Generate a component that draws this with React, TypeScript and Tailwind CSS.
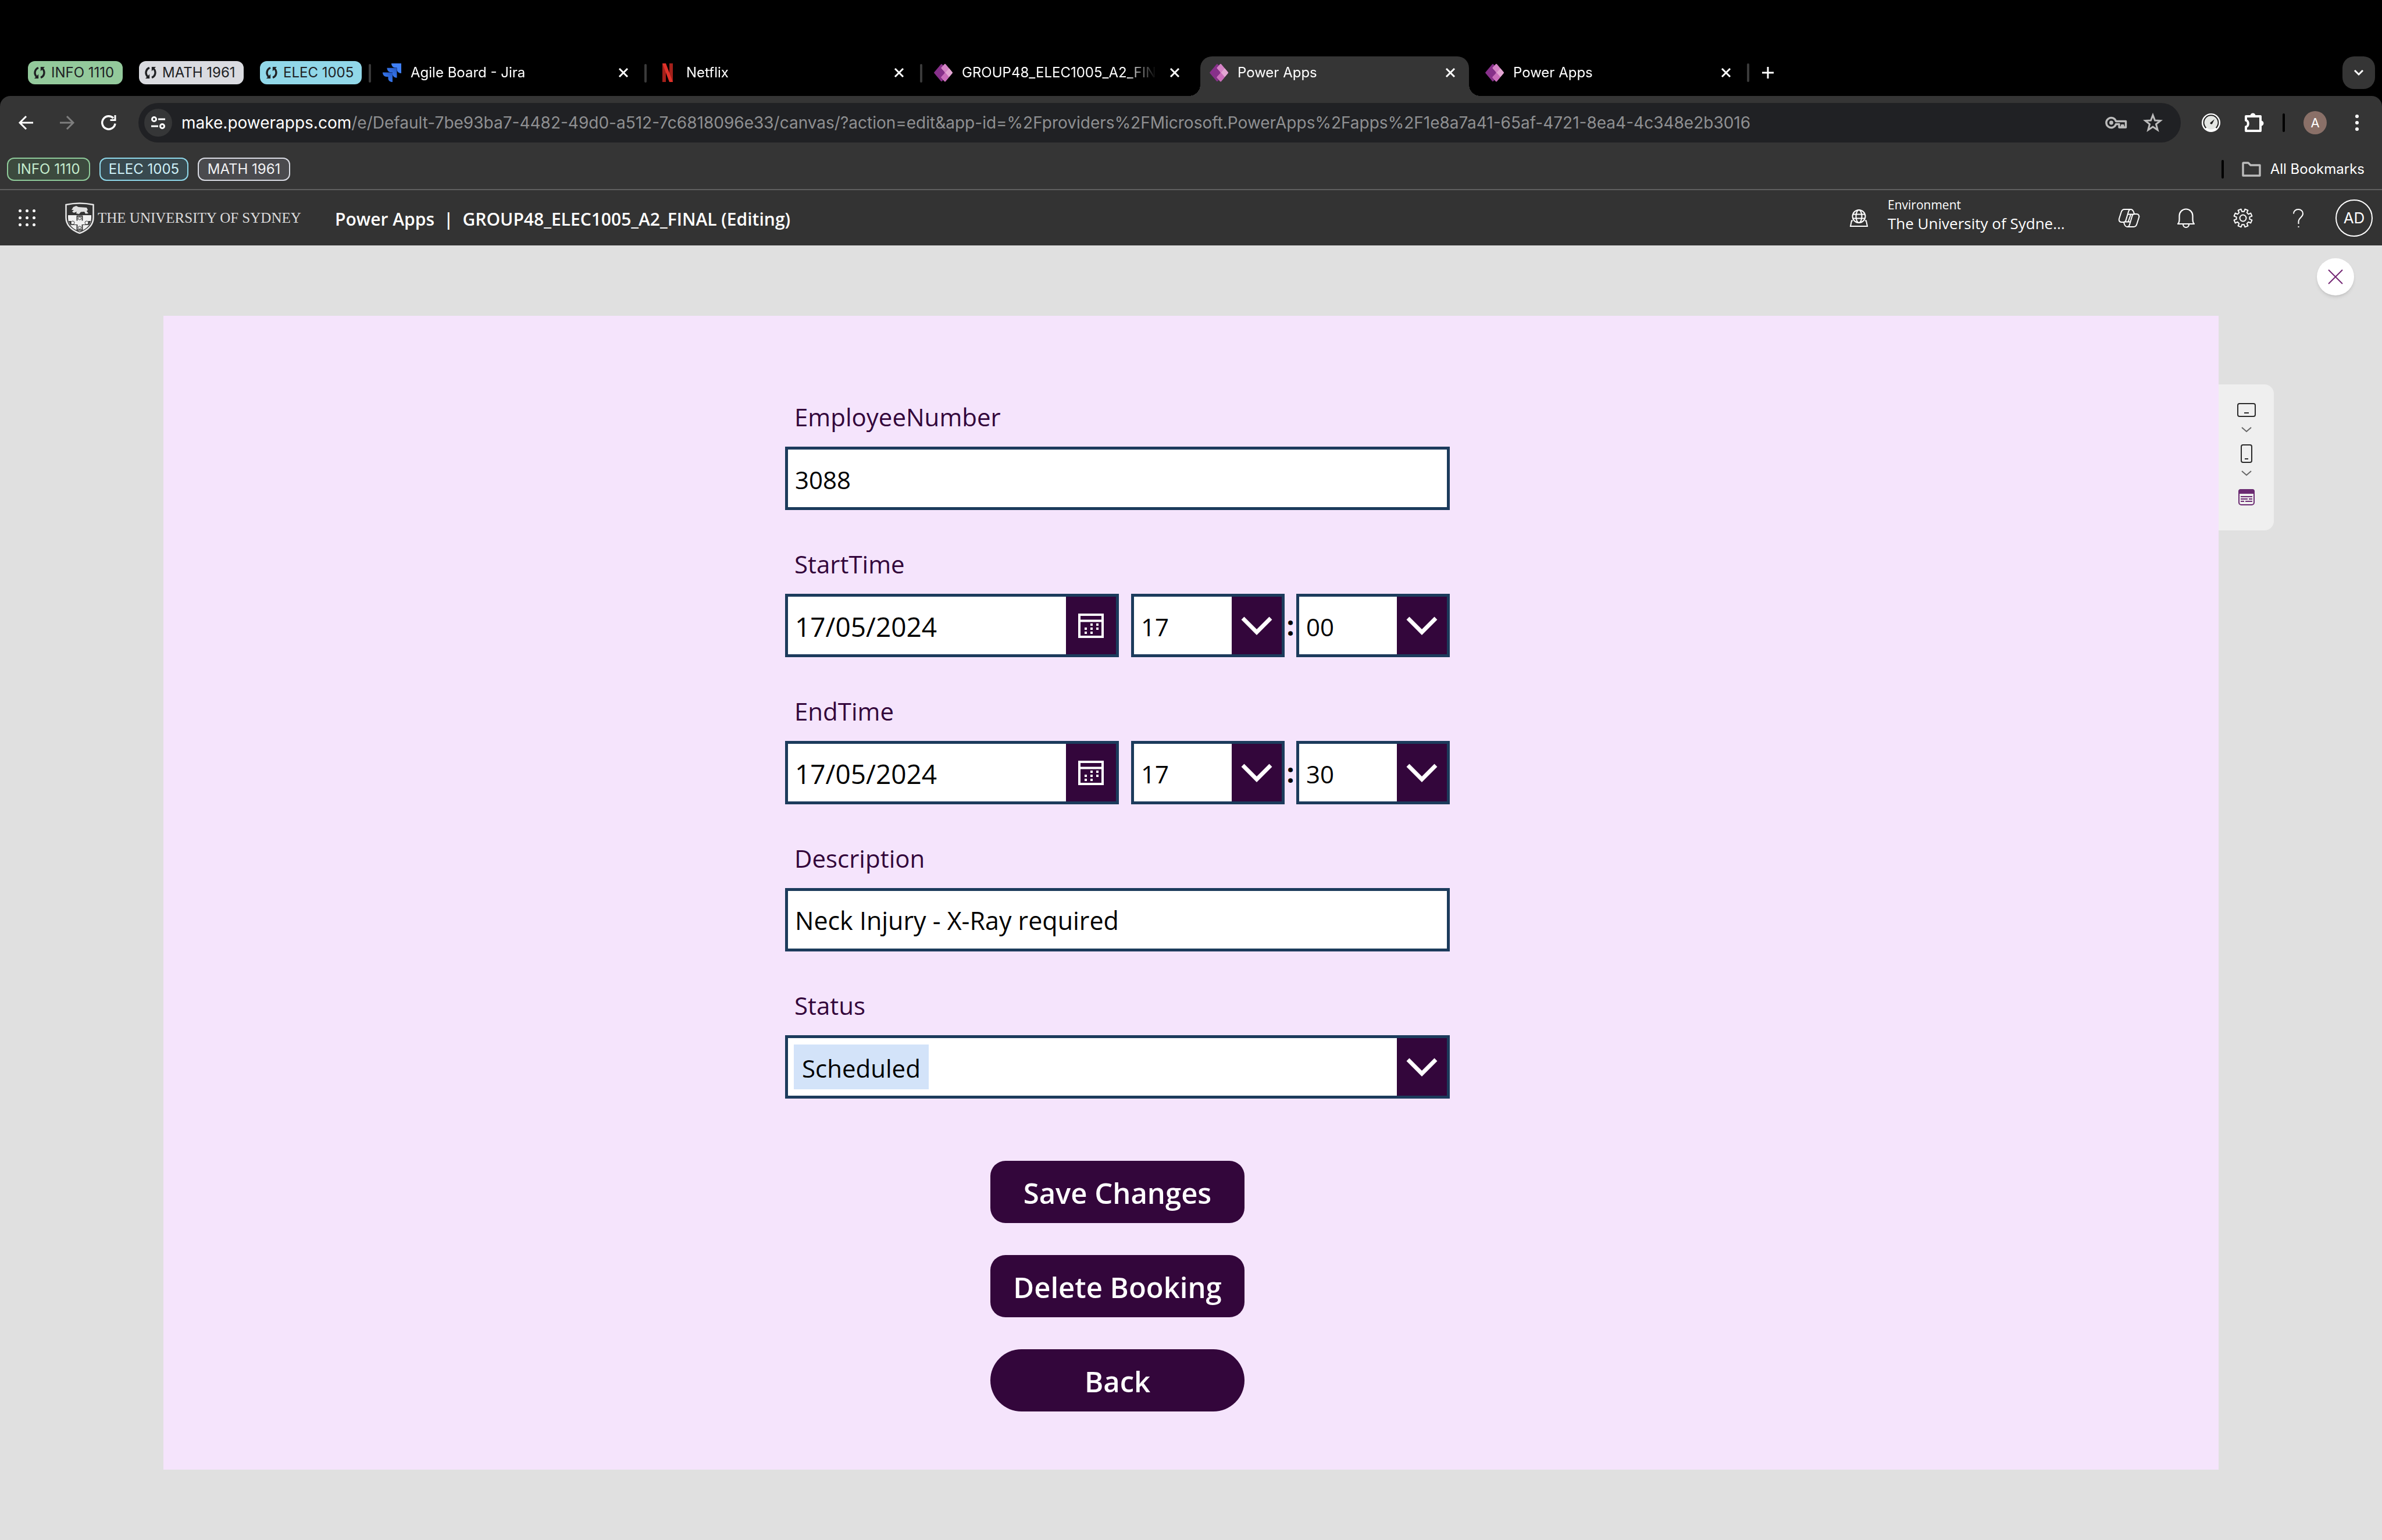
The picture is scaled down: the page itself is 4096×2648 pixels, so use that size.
import React from "react";

const ui = "font-['Inter','Liberation_Sans',sans-serif]";
const segoe = "font-['Open_Sans','Noto_Sans',sans-serif]";

/* ---------- icons ---------- */

const Svg = ({
  w,
  h,
  sw = 2,
  className = "",
  children,
}: {
  w: number;
  h: number;
  sw?: number;
  className?: string;
  children: React.ReactNode;
}) => (
  <svg
    width={w}
    height={h}
    viewBox={`0 0 ${w} ${h}`}
    fill="none"
    stroke="currentColor"
    strokeWidth={sw}
    className={`shrink-0 overflow-visible ${className}`}
    aria-hidden="true"
  >
    {children}
  </svg>
);

const SyncIcon = () => (
  <Svg w={20} h={20} sw={3.4}>
    <path d="M8 1.500C1.500 4 0 12 5 17" />
    <path d="M1 20H8.200V12.500Z" fill="currentColor" stroke="none" />
    <path d="M12 18.500C18.500 16 20 8 15 3" />
    <path d="M19 0H11.800V7.500Z" fill="currentColor" stroke="none" />
  </Svg>
);

const CrossIcon = () => (
  <Svg w={16} h={16} sw={3}>
    <path d="M1 1L15 15M15 1L1 15" />
  </Svg>
);

const JiraIcon = () => (
  <svg width="32" height="32" viewBox="0 0 32 32" className="shrink-0" aria-hidden="true">
    <defs>
      <linearGradient id="jira" x1="1" y1="0" x2="0.3" y2="0.8">
        <stop offset="0.1" stopColor="#2458c4" />
        <stop offset="1" stopColor="#3d7ff7" />
      </linearGradient>
    </defs>
    <path d="M15 0H32V17C27.500 17 24.500 14 24.500 10V7.500H22C18 7.500 15 4.500 15 0Z" fill="#3f80f6" />
    <path d="M7.500 7.800H24.500V24.800C20 24.800 17 21.800 17 17.800V15.300H14.500C10.500 15.300 7.500 12.300 7.500 7.800Z" fill="url(#jira)" />
    <path d="M0 15.500H17V32C12.500 32 9.500 29.500 9.500 25.500V23H7C3 23 0 20 0 15.500Z" fill="url(#jira)" />
  </svg>
);

const NetflixIcon = () => (
  <svg width="32" height="32" viewBox="0 0 32 32" className="shrink-0" aria-hidden="true">
    <path d="M7 0H13V32L7 32Z" fill="#a3201a" />
    <path d="M19 0H25V32H19Z" fill="#a3201a" />
    <path d="M7 0H13L25 32L19 32Z" fill="#e0322a" />
  </svg>
);

const PowerAppsIcon = () => (
  <svg width="32" height="32" viewBox="0 0 32 32" className="shrink-0" aria-hidden="true">
    <path d="M12 1.500Q13 .5 14 1.500L20 8V24L14 30.500Q13 31.500 12 30.500L.6 17Q-.3 16 .6 15Z" fill="#87308a" />
    <path d="M15 5L19 9V24L15 29L12 24L19 16L12 9Z" fill="#5e1d63" />
    <path d="M18 1.200Q19 .2 20 1.200L31.500 15Q32.300 16 31.500 17L20 30.800Q19 31.800 18 30.800L12.800 25Q12 24 12.800 23L18 17.300Q19 16 18 14.700L12.800 9Q12 8 12.800 7Z" fill="#d583c6" />
    <path d="M26 8.500L31.500 15Q32.300 16 31.500 17L26 23.500L19.500 16Z" fill="#e3a6d3" />
    <path d="M19.500 16L26 23.500L20 30.800Q19 31.800 18 30.800L12.800 25Q12 24 12.800 23Z" fill="#c96dba" />
  </svg>
);

const gearPath = () => {
  const pts: string[] = [];
  for (let i = 0; i < 8; i++) {
    const mid = i * 45 + 22.5;
    [
      [mid - 13, 11.5],
      [mid - 10, 15.8],
      [mid + 10, 15.8],
      [mid + 13, 11.5],
    ].forEach(([a, r]) => {
      const t = ((a - 90) * Math.PI) / 180;
      pts.push(`${(16 + r * Math.cos(t)).toFixed(2)} ${(16 + r * Math.sin(t)).toFixed(2)}`);
    });
  }
  return `M${pts.join("L")}Z`;
};

const Shield = () => (
  <svg width="50" height="54" viewBox="0 0 50 54" className="shrink-0" aria-hidden="true">
    <path d="M1.500 4Q25-1 48.500 4V26C48.500 40 38 48 25 53C12 48 1.500 40 1.500 26Z" fill="#333" stroke="#e6e6e6" strokeWidth="2.500" />
    <path d="M5 22H45V27C45 39 36 46 25 50C14 46 5 39 5 27Z" fill="#f0f0f0" />
    <path d="M6 32H44L41 39H9Z" fill="#333" />
    <path d="M20.500 23.500H29.500V47.500H20.500Z" fill="#f0f0f0" stroke="#333" strokeWidth="1.800" />
    <path d="M10 31.500H40V38H10Z" fill="#f0f0f0" />
    <circle cx="13" cy="35" r="3" fill="#f0f0f0" stroke="#444" />
    <circle cx="37" cy="35" r="3" fill="#f0f0f0" stroke="#444" />
    <circle cx="25" cy="27.500" r="2.600" fill="#ddd" stroke="#444" />
    <circle cx="25" cy="43.500" r="2.600" fill="#ddd" stroke="#444" />
    <path d="M11 13L14 8L19 6L23 8L30 8.500L37 9L39 13L37 15L40 19L35 19.500L33 16L27 16.500L24 20L19 19L20 16L15 18L12 16L15 13Z" fill="#e0e0e0" />
  </svg>
);

const CalendarIcon = () => (
  <Svg w={44} h={42} sw={4}>
    <path d="M2 2H42V40H2ZM2 12.500H42" />
    <path
      d="M21 17h4v4h-4zM31 17h4v4h-4zM11 24h4v4h-4zM21 24h4v4h-4zM31 24h4v4h-4zM11 31h4v4h-4zM21 31h4v4h-4z"
      fill="currentColor"
      stroke="none"
    />
  </Svg>
);

const ChevronIcon = () => (
  <Svg w={54} h={32} sw={7}>
    <path d="M3 3L27 27L51 3" />
  </Svg>
);

/* ---------- browser ---------- */

const groups = [
  { name: "INFO 1110", box: "w-[163px] bg-[#93c99b]" },
  { name: "MATH 1961", box: "w-[180px] bg-[#dadbe0]" },
  { name: "ELEC 1005", box: "w-[175px] bg-[#91d7e8]" },
];

const tabs = [
  { title: "Agile Board - Jira", icon: <JiraIcon />, line: true },
  { title: "Netflix", icon: <NetflixIcon />, line: true },
  { title: "GROUP48_ELEC1005_A2_FINAL", icon: <PowerAppsIcon />, line: true },
  { title: "Power Apps", icon: <PowerAppsIcon />, line: false, active: true },
  { title: "Power Apps", icon: <PowerAppsIcon />, line: false },
];

const flare =
  "before:absolute before:bottom-0 before:-left-5 before:size-5 before:bg-[radial-gradient(circle_at_0_0,transparent_20px,#353535_20px)] before:content-[''] after:absolute after:bottom-0 after:-right-5 after:size-5 after:bg-[radial-gradient(circle_at_100%_0,transparent_20px,#353535_20px)] after:content-['']";

const TabStrip = () => (
  <div className="flex h-[165px] items-end pr-3 pl-12 text-2xl text-white">
    <div className="flex h-[68px] items-center pb-3 gap-7 text-[#202124]">
      {groups.map((g) => (
        <button key={g.name} type="button" className={`flex h-10 items-center gap-[10px] rounded-xl pl-[10px] whitespace-nowrap ${g.box}`}>
          <SyncIcon />
          {g.name}
        </button>
      ))}
    </div>
    <div className="ml-3 flex" role="tablist">
      {tabs.map((t, i) => (
        <div key={i} className="flex w-[474px] gap-1">
          <span className={`mt-[13px] h-8 w-1 rounded-full ${t.line ? "bg-[#3a3a3a]" : ""}`} />
          <div className={`relative flex h-[68px] w-[462px] items-center rounded-t-[20px] pr-3 pb-3 pl-4 ${t.active ? `bg-[#353535] ${flare}` : ""}`}>
            {t.icon}
            <button
              type="button"
              role="tab"
              aria-selected={!!t.active}
              className="mr-3 ml-4 min-w-0 flex-1 overflow-hidden [mask-image:linear-gradient(to_right,black_84%,transparent)] text-left whitespace-nowrap"
            >
              {t.title}
            </button>
            <button type="button" aria-label={`Close ${t.title}`} className="flex size-10 items-center justify-center">
              <CrossIcon />
            </button>
          </div>
        </div>
      ))}
    </div>
    <div className="flex h-[68px] pt-3">
      <span className="h-8 w-1 rounded-full bg-[#3a3a3a]" />
      <button type="button" aria-label="New tab" className="ml-[22px] flex h-8 items-center">
        <Svg w={20} h={20} sw={3}>
          <path d="M10 0V20M0 10H20" />
        </Svg>
      </button>
    </div>
    <button type="button" aria-label="Search tabs" className="mb-3 ml-auto flex size-14 items-center justify-center rounded-[20px] bg-[#353535]">
      <Svg w={16} h={10} sw={3}>
        <path d="M1 1L8 8L15 1" />
      </Svg>
    </button>
  </div>
);

const Toolbar = () => (
  <div className="flex h-[92px] items-center pr-[30px] text-white">
    <button type="button" aria-label="Back" className="ml-8">
      <Svg w={25} h={24} sw={3}>
        <path d="M25 12H2M13 1L2 12L13 23" />
      </Svg>
    </button>
    <button type="button" aria-label="Forward" className="ml-[46px] text-[#7e7e7e]">
      <Svg w={25} h={24} sw={3}>
        <path d="M0 12H23M12 1L23 12L12 23" />
      </Svg>
    </button>
    <button type="button" aria-label="Reload" className="ml-[46px]">
      <Svg w={26} h={26} sw={3.4}>
        <path d="M24 14.500A11.200 11.200 0 1 1 21 5.200" />
        <path d="M25.500 0V10H15.500V7H22.500V0Z" fill="currentColor" stroke="none" />
      </Svg>
    </button>
    <div className="ml-[38px] flex h-[68px] min-w-0 flex-1 items-center rounded-full bg-[#202124] pr-8 pl-[10px]">
      <button type="button" aria-label="Site information" className="flex size-12 items-center justify-center rounded-full bg-[#353637]">
        <Svg w={24} h={22} sw={3}>
          <circle cx="5" cy="5" r="3.500" />
          <path d="M12 5H24M0 17H12" />
          <circle cx="19" cy="17" r="3.500" />
        </Svg>
      </button>
      <div
        role="textbox"
        aria-label="Address"
        contentEditable
        suppressContentEditableWarning
        className="ml-4 min-w-0 flex-1 overflow-hidden text-[28px] leading-10 whitespace-nowrap text-[#8f9092] outline-none"
      >
        <span className="text-white">make.powerapps.com</span>
        /e/Default-7be93ba7-4482-49d0-a512-7c6818096e33/canvas/?action=edit&amp;app-id=%2Fproviders%2FMicrosoft.PowerApps%2Fapps%2F1e8a7a41-65af-4721-8ea4-4c348e2b3016
      </div>
      <button type="button" aria-label="Passwords" className="text-[#bcbcbc]">
        <Svg w={37} h={20} sw={3.4}>
          <path d="M18.500 7.500A8.500 8.500 0 1 0 18.500 12.500H24V18H28.500V14.500H31V18H35.500V7.500Z" strokeLinejoin="round" />
          <circle cx="10.500" cy="10" r="3.400" fill="currentColor" stroke="none" />
        </Svg>
      </button>
      <button type="button" aria-label="Bookmark this page" className="ml-[29px] text-[#bcbcbc]">
        <Svg w={32} h={32} sw={3}>
          <path d="M16 3L19.500 12L29 12.500L21.500 18.500L24.200 28.500L16 23L7.800 28.500L10.500 18.500L3 12.500L12.500 12Z" />
        </Svg>
      </button>
    </div>
    <button type="button" aria-label="Speed extension" className="ml-9">
      <svg width="32" height="32" viewBox="0 0 32 32" aria-hidden="true">
        <circle cx="16" cy="16" r="16" fill="#fff" />
        <circle cx="16" cy="16" r="11.500" fill="#e4e6e3" />
        <path d="M7.500 25A12.500 12.500 0 1 1 24.500 25" fill="none" stroke="#1d1d1d" strokeWidth="2" />
        <path d="M22 10L18.500 17A2 2 0 1 1 14.500 16Z" fill="#1d1d1d" />
      </svg>
    </button>
    <button type="button" aria-label="Extensions" className="ml-[41px]">
      <Svg w={34} h={34} sw={4}>
        <path d="M3 6H28V31H3V24C8 24 8 13 3 13Z" strokeLinejoin="round" />
        <path d="M10.500 5A4.500 4.500 0 0 1 19.500 5ZM29 13.500A4.500 4.500 0 0 1 29 22.500Z" fill="currentColor" stroke="none" />
      </Svg>
    </button>
    <span className="ml-8 h-8 w-1 rounded-full bg-black" />
    <button type="button" aria-label="Profile" className="ml-8 flex size-10 items-center justify-center rounded-full bg-[#8a7068] text-[22px]">
      A
    </button>
    <button type="button" aria-label="Menu" className="mr-[10px] ml-[49px]">
      <Svg w={6} h={30}>
        <g fill="currentColor" stroke="none">
          <circle cx="3" cy="4" r="3" />
          <circle cx="3" cy="15" r="3" />
          <circle cx="3" cy="26" r="3" />
        </g>
      </Svg>
    </button>
  </div>
);

const bookmarks = [
  { name: "INFO 1110", box: "w-[143px] border-[#8fcb9a] bg-[#3c4a3e] text-[#c5ecce]" },
  { name: "ELEC 1005", box: "w-[153px] border-[#8fd8ea] bg-[#38494f] text-[#cdeff7]" },
  { name: "MATH 1961", box: "w-[159px] border-[#dadce4] bg-[#4a4a4e] text-[#f1f1f3]" },
];

const BookmarkBar = () => (
  <div className="flex h-[68px] items-center gap-4 pr-[30px] pl-3 text-2xl text-white">
    {bookmarks.map((b) => (
      <button key={b.name} type="button" className={`flex h-10 items-center justify-center rounded-xl border-2 whitespace-nowrap ${b.box}`}>
        {b.name}
      </button>
    ))}
    <span className="ml-auto h-8 w-1 rounded-full bg-black" />
    <button type="button" className="ml-[15px] flex items-center gap-4 whitespace-nowrap">
      <Svg w={33} h={26} sw={3.4} className="text-[#bcbcbc]">
        <path d="M3 2H11L15 6H31V24H2V3Q2 2 3 2Z" strokeLinejoin="round" />
      </Svg>
      All Bookmarks
    </button>
  </div>
);

/* ---------- Power Apps header ---------- */

const AppHeader = () => (
  <header className={`flex h-[95px] items-center bg-[#333] pr-4 pl-8 text-white ${segoe}`}>
    <button type="button" aria-label="App launcher" className="grid grid-cols-3 gap-[7px]">
      {Array.from({ length: 9 }, (_, i) => (
        <span key={i} className="size-[5px] rounded-full bg-white" />
      ))}
    </button>
    <a href="#" className="ml-[51px] flex w-[464px] items-center gap-1.5 whitespace-nowrap">
      <Shield />
      <span className="font-['Liberation_Serif',serif] text-[25px] text-[#dcdcdc]">THE UNIVERSITY OF SYDNEY</span>
    </a>
    <div className="flex gap-4 pt-1 text-[30px] font-semibold whitespace-nowrap">
      <a href="#">Power Apps</a>
      <span>|</span>
      <span>GROUP48_ELEC1005_A2_FINAL (Editing)</span>
    </div>
    <button type="button" className="ml-auto flex items-center gap-[34px] text-left">
      <Svg w={31} h={30} sw={2}>
        <circle cx="15.500" cy="12" r="11" />
        <ellipse cx="15.500" cy="12" rx="5" ry="11" />
        <path d="M5 8.500H26M5 15.500H26M5 19.500H3L1 29H30L28 19.500H26" />
      </Svg>
      <span className="w-[397px] pb-3 whitespace-nowrap">
        <span className="block text-[21px] leading-[30px]">Environment</span>
        <span className="block text-[26px] leading-[34px]">The University of Sydne...</span>
      </span>
    </button>
    <button type="button" aria-label="Copilot">
      <Svg w={36} h={32} sw={2}>
        <path d="M10 1H21C24 1 25 3 26 5.500L27 9H31C34.500 9 36 12 35 15L31.500 26C30.500 29.500 29 31 26 31H15C12 31 11 29 10 26.500L9 23H5C1.500 23 0 20 1 17L4.500 6C5.500 2.500 7 1 10 1Z" />
        <path d="M21 1C18.500 1 17.500 3 17 5L12.500 20C12 22 11 23 9 23M15 31C17.500 31 18.500 29 19 27L23.500 12C24 10 25 9 27 9M16 9.500H27M9 22.500H20M21 10L16.500 22.500" />
      </Svg>
    </button>
    <button type="button" aria-label="Notifications" className="ml-[65px]">
      <Svg w={30} h={32} sw={2.2}>
        <path d="M1 26C3 24 3.500 22 3.500 19V12A11.500 11.500 0 0 1 26.500 12V19C26.500 22 27 24 29 26ZM10 27A5 5 0 0 0 20 27" strokeLinejoin="round" />
      </Svg>
    </button>
    <button type="button" aria-label="Settings" className="ml-[67px]">
      <Svg w={32} h={32} sw={2}>
        <path d={gearPath()} strokeLinejoin="round" />
        <circle cx="16" cy="16" r="5.500" />
      </Svg>
    </button>
    <button type="button" aria-label="Help" className="ml-[70px]">
      <Svg w={18} h={32} sw={2}>
        <path d="M1 8.500C1 4 4.500 1 9 1S17 4 17 8.500C17 14.500 9.500 15.500 9.500 22V26M8.500 31H10.500" />
      </Svg>
    </button>
    <button type="button" aria-label="Account" className={`ml-[55px] flex size-16 items-center justify-center rounded-full border-2 border-white text-[26px] ${ui}`}>
      AD
    </button>
  </header>
);

/* ---------- form ---------- */

const box = "flex h-[109px] border-[5px] border-[#1c3b5c] bg-white";
const fieldText = "min-w-0 flex-1 appearance-none bg-transparent pt-1 pl-3 text-black outline-none";
const sideButton = "flex w-[86px] shrink-0 items-center justify-center bg-[#33063b] text-white";

const Field = ({ label, id, children }: { label: string; id: string; children: React.ReactNode }) => (
  <div className="flex flex-col gap-[19px]">
    <label htmlFor={id} className="pl-4 text-[42px] leading-[64px] text-[#33063b]">
      {label}
    </label>
    {children}
  </div>
);

const SmallSelect = ({ id, label, value }: { id: string; label: string; value: string }) => (
  <div className={`${box} w-[264px] shrink-0`}>
    <select id={id} aria-label={label} defaultValue={value} className={`${fieldText} text-[42px]`}>
      <option>{value}</option>
    </select>
    <span className={`${sideButton} pointer-events-none`}>
      <ChevronIcon />
    </span>
  </div>
);

const DateTimeField = ({ label, id, date, hour, minute }: { label: string; id: string; date: string; hour: string; minute: string }) => (
  <Field label={label} id={id}>
    <div className="flex">
      <div className={`${box} mr-[21px] min-w-0 flex-1`}>
        <input id={id} defaultValue={date} className={`${fieldText} text-[46px]`} />
        <button type="button" aria-label={`Pick ${label}`} className={sideButton}>
          <CalendarIcon />
        </button>
      </div>
      <SmallSelect id={`${id}-hour`} label={`${label} hour`} value={hour} />
      <span className="w-5 shrink-0 text-center text-[46px] leading-[109px] font-bold text-black">:</span>
      <SmallSelect id={`${id}-minute`} label={`${label} minute`} value={minute} />
    </div>
  </Field>
);

const action = "h-[107px] w-[437px] bg-[#33063b] pt-1 text-[49px] font-semibold text-white";

const BookingForm = () => (
  <form className="col-start-2 flex flex-col gap-[61px] pt-[142px]" onSubmit={(e) => e.preventDefault()}>
    <Field label="EmployeeNumber" id="employee">
      <div className={box}>
        <input id="employee" defaultValue="3088" className={`${fieldText} text-[42px]`} />
      </div>
    </Field>
    <DateTimeField label="StartTime" id="start" date="17/05/2024" hour="17" minute="00" />
    <DateTimeField label="EndTime" id="end" date="17/05/2024" hour="17" minute="30" />
    <Field label="Description" id="description">
      <div className={box}>
        <input id="description" defaultValue="Neck Injury - X-Ray required" className={`${fieldText} text-[43px]`} />
      </div>
    </Field>
    <Field label="Status" id="status">
      <div className={`${box} items-stretch justify-between`}>
        <select id="status" defaultValue="Scheduled" className="my-[11px] ml-[10px] [field-sizing:content] appearance-none bg-[#d3e3f9] px-[14px] pt-1 text-[42px] text-black">
          <option>Scheduled</option>
        </select>
        <button type="button" aria-label="Show status options" className={sideButton}>
          <ChevronIcon />
        </button>
      </div>
    </Field>
    <div className="mt-[46px] flex flex-col items-center gap-[55px]">
      <button type="submit" className={`${action} rounded-[26px]`}>
        Save Changes
      </button>
      <button type="button" className={`${action} rounded-[26px]`}>
        Delete Booking
      </button>
      <button type="button" className={`${action} rounded-full`}>
        Back
      </button>
    </div>
  </form>
);

const SmallChevron = () => (
  <Svg w={16} h={9} sw={2} className="text-[#666]">
    <path d="M0 1L8 8L16 1" />
  </Svg>
);

const DevicePanel = () => (
  <nav aria-label="Preview device" className="mt-[153px] flex h-[251px] w-[95px] flex-col items-center rounded-r-2xl bg-[#efefef] pt-8 text-[#2b2b2b]">
    <button type="button" aria-label="Tablet">
      <Svg w={32} h={24} sw={2}>
        <rect x="1" y="1" width="30" height="22" rx="3" />
        <path d="M12 17H20" />
      </Svg>
    </button>
    <span className="mt-[17px]">
      <SmallChevron />
    </span>
    <button type="button" aria-label="Phone" className="mt-[21px]">
      <Svg w={20} h={32} sw={2}>
        <rect x="1" y="1" width="18" height="30" rx="3" />
        <path d="M7 25H13" />
      </Svg>
    </button>
    <span className="mt-[13px]">
      <SmallChevron />
    </span>
    <button type="button" aria-label="Custom size" className="mt-[23px] text-[#6b2b72]">
      <Svg w={28} h={28} sw={2}>
        <rect x="1" y="1" width="26" height="26" rx="4" />
        <path d="M1 7H27V4Q27 1 24 1H4Q1 1 1 4Z" fill="currentColor" />
        <path d="M4 13H24M4 17H16M18 17H24M4 21H10M12 21H24" />
      </Svg>
    </button>
  </nav>
);

export default function App() {
  return (
    <div className={`flex min-h-screen flex-col bg-black ${ui}`}>
      <TabStrip />
      <div className="rounded-t-[18px] bg-[#353535]">
        <Toolbar />
        <BookmarkBar />
        <div className="h-0.5 bg-[#5f5f5f]" />
      </div>
      <AppHeader />
      <main className={`flex flex-1 bg-[#e0e0e0] ${segoe}`}>
        <section className="my-[121px] ml-[281px] grid flex-1 grid-cols-[1069fr_1143px_1322fr] bg-[#f5e4fc]">
          <BookingForm />
        </section>
        <aside className="flex w-[281px] flex-col pt-[22px]">
          <button type="button" aria-label="Close preview" className="mr-12 flex size-16 items-center justify-center self-end rounded-full bg-white text-[#742774] shadow-md">
            <Svg w={24} h={24} sw={2}>
              <path d="M0 0L24 24M24 0L0 24" />
            </Svg>
          </button>
          <DevicePanel />
        </aside>
      </main>
    </div>
  );
}
